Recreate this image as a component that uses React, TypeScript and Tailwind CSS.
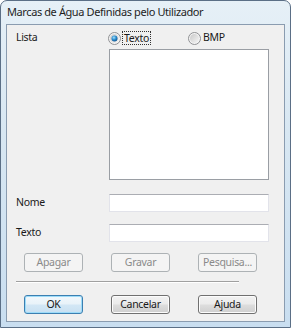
import React from "react";

function Radio({ checked }: { checked?: boolean }) {
  return (
    <svg width="13" height="13" viewBox="0 0 13 13" className="shrink-0">
      <defs>
        <linearGradient id={checked ? "rgA" : "rgB"} x1="0" y1="0" x2="1" y2="1">
          <stop offset="0" stopColor="#c9c9c9" />
          <stop offset="1" stopColor="#f6f6f6" />
        </linearGradient>
        <radialGradient id="dot" cx="0.4" cy="0.35" r="0.7">
          <stop offset="0" stopColor="#a8e0fb" />
          <stop offset="0.5" stopColor="#2c8fd0" />
          <stop offset="1" stopColor="#0f4f8a" />
        </radialGradient>
      </defs>
      <circle cx="6.5" cy="6.5" r="6" fill="#f4f4f4" stroke="#8f9093" strokeWidth="1" />
      <circle cx="6.5" cy="6.5" r="4.5" fill={`url(#${checked ? "rgA" : "rgB"})`} />
      {checked && <circle cx="6.5" cy="6.5" r="3" fill="url(#dot)" />}
    </svg>
  );
}

function Btn({ label, kind }: { label: string; kind: "disabled" | "normal" | "default" }) {
  const base =
    "w-[59px] h-[19px] rounded-[3px] flex items-center justify-center text-[10.5px] tracking-[-0.3px] leading-none";
  if (kind === "disabled") {
    return (
      <div className={`${base} border border-[#adb2b5] bg-[#f4f4f4] text-[#8a8a8a]`}>{label}</div>
    );
  }
  if (kind === "default") {
    return (
      <div
        className={`${base} border border-[#3c7fb1] text-[#1a1a1a] bg-[linear-gradient(#f2f8fc_0%,#e8f2f9_48%,#d3e7f5_52%,#c8e0f2_100%)] shadow-[inset_0_0_0_1px_#9ddcf9]`}
      >
        {label}
      </div>
    );
  }
  return (
    <div
      className={`${base} border border-[#707070] text-[#1a1a1a] bg-[linear-gradient(#f2f2f2_0%,#ebebeb_48%,#dddddd_52%,#cfcfcf_100%)] shadow-[inset_0_0_0_1px_#fcfcfc]`}
    >
      {label}
    </div>
  );
}

export default function App() {
  return (
    <div
      className="w-[291px] h-[328px] overflow-hidden bg-white"
      style={{ fontFamily: '"Noto Sans", "Open Sans", sans-serif' }}
    >
      <div className="w-[291px] h-[328px] flex flex-col rounded-t-[7px] border border-[#5b6f86] bg-[linear-gradient(180deg,#e6f0f7_0%,#d8e7f2_40%,#c9def0_100%)]">
        <div className="h-[23px] flex items-center pl-[6px] text-[11px] tracking-[-0.4px] text-[#1e1e1e] shrink-0">
          Marcas de Água Definidas pelo Utilizador
        </div>
        <div className="mx-[5px] h-[298px] border border-[#8a9cb0] bg-[#f0f0f0] flex flex-col text-[10.5px] tracking-[-0.3px] text-[#1a1a1a]">
          <div className="mt-[6px] h-[14px] flex items-center">
            <div className="w-[101px] pl-[9px]">Lista</div>
            <div className="w-[80px] flex items-center">
              <Radio checked />
              <span className="ml-[1px] px-[1px] border border-dotted border-[#333] leading-[12px]">Texto</span>
            </div>
            <div className="flex items-center">
              <Radio />
              <span className="ml-[2px]">BMP</span>
            </div>
          </div>
          <div className="mt-[4px] ml-[102px] w-[160px] h-[131px] border border-[#9a9ea4] bg-white" />
          <div className="mt-[14px] h-[18px] flex items-center">
            <div className="w-[102px] pl-[9px]">Nome</div>
            <div className="w-[160px] h-[18px] border border-[#e2e3ea] border-t-[#abadb3] bg-white" />
          </div>
          <div className="mt-[12px] h-[18px] flex items-center">
            <div className="w-[102px] pl-[9px]">Texto</div>
            <div className="w-[160px] h-[18px] border border-[#e2e3ea] border-t-[#abadb3] bg-white" />
          </div>
          <div className="mt-[11px] pl-[17px] flex gap-[28px]">
            <Btn label="Apagar" kind="disabled" />
            <Btn label="Gravar" kind="disabled" />
            <Btn label="Pesquisa..." kind="disabled" />
          </div>
          <div className="mt-[9px] ml-[9px] w-[223px] h-[2px] border-t border-[#a0a0a0] border-b border-b-white" />
          <div className="mt-[12px] pl-[17px] flex gap-[28px]">
            <Btn label="OK" kind="default" />
            <Btn label="Cancelar" kind="normal" />
            <Btn label="Ajuda" kind="normal" />
          </div>
        </div>
      </div>
    </div>
  );
}
